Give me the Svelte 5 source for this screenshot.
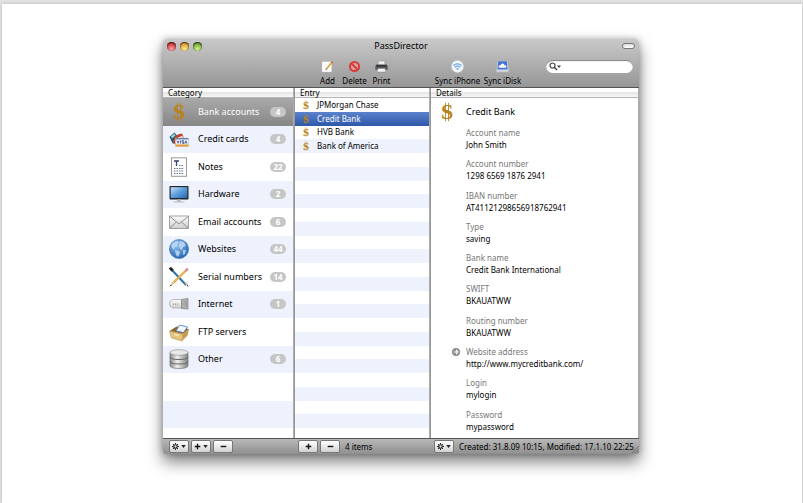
<!--
  PassDirector: three-pane password manager window
  (categories, entries of the category, details of the entry).
-->
<script>
  const categories = [
    { name: 'Bank accounts', icon: 'dollar', count: 4 },
    { name: 'Credit cards', icon: 'cards', count: 4 },
    { name: 'Notes', icon: 'note', count: 22 },
    { name: 'Hardware', icon: 'monitor', count: 2 },
    { name: 'Email accounts', icon: 'mail', count: 6 },
    { name: 'Websites', icon: 'globe', count: 44 },
    { name: 'Serial numbers', icon: 'pencils', count: 14 },
    { name: 'Internet', icon: 'modem', count: 1 },
    { name: 'FTP servers', icon: 'box', count: 0 },
    { name: 'Other', icon: 'disks', count: 6 }
  ];

  const entries = ['JPMorgan Chase', 'Credit Bank', 'HVB Bank', 'Bank of America'];

  const fields = [
    { label: 'Account name', value: 'John Smith' },
    { label: 'Account number', value: '1298 6569 1876 2941' },
    { label: 'IBAN number', value: 'AT41121298656918762941' },
    { label: 'Type', value: 'saving' },
    { label: 'Bank name', value: 'Credit Bank International' },
    { label: 'SWIFT', value: 'BKAUATWW' },
    { label: 'Routing number', value: 'BKAUATWW' },
    { label: 'Website address', value: 'http://www.mycreditbank.com/', link: true },
    { label: 'Login', value: 'mylogin' },
    { label: 'Password', value: 'mypassword' }
  ];

  let category = $state('Bank accounts');
  let entry = $state('Credit Bank');
  let query = $state('');
</script>

{#snippet icon(name)}
  <svg class="icon" viewBox="0 0 20 20" aria-hidden="true">
    {#if name === 'dollar'}
      <path d="M8.500 .8v18.400M11.500 .8v18.400" stroke="#b9821c" stroke-width=".9" />
      <text x="10" y="17" text-anchor="middle" class="coin">S</text>
    {:else if name === 'cards'}
      <path d="M.5 8l5-4.500L10 9l-6 6z" fill="#1d5a6e" />
      <path d="M2 7.500l3.500-3 1 2-3.500 3z" fill="#a9d0cf" />
      <path d="M4 13q1-8 9-8.500l2 5-9 6z" fill="#c3402d" />
      <path d="M6 13q1-5 7.500-6l1 3-7 5z" fill="#f2e7dc" />
      <rect x="6.500" y="9" width="13" height="8.500" fill="#f3f3f3" stroke="#a9a9a9" stroke-width=".4" />
      <path d="M6.500 9h13v1.500h-13z" fill="#6f86b5" />
      <path d="M6.500 15.500h13v2h-13z" fill="#e29a35" />
      <path d="M8 11.700l1 2.600 1-2.600M11.500 11.500v3M15 11.800h-2v1.200h2v1.300h-2M16 14.600l1-2.800 1 2.800" fill="none" stroke="#29498c" stroke-width=".8" />
    {:else if name === 'note'}
      <rect x="2.500" y=".8" width="15" height="18.500" fill="#fdfdfd" stroke="#999" />
      <path d="M5 4h5M7.500 4v5" stroke="#33416e" stroke-width="1.300" />
      <path d="M10 8.500h5M5 11.500h10M5 14h10M5 16.500h10" stroke="#69718f" stroke-width="1" stroke-dasharray="1.500 1" />
    {:else if name === 'monitor'}
      <rect x=".5" y="2" width="19" height="13.500" rx=".8" fill="#22262d" />
      <rect x="1.700" y="3.200" width="16.600" height="10.800" fill="url(#screen)" />
      <path d="M8 15.500h4v2h3.500v1h-11v-1H8z" fill="#b9bcc0" />
    {:else if name === 'mail'}
      <rect x=".6" y="4" width="18.800" height="12.500" fill="url(#silver)" stroke="#8d8d8d" stroke-width=".8" />
      <path d="M1 4.500l9 7.500 9-7.500M1 16l6.500-6M19 16l-6.500-6" fill="none" stroke="#858585" stroke-width=".9" />
    {:else if name === 'globe'}
      <circle cx="10" cy="10" r="9.600" fill="url(#ocean)" stroke="#2e64a8" stroke-width=".5" />
      <path d="M2 6q3-4 7-4l1 2-2 1 1 2-3 1-1 3-2-2zM11 2l4 1 2 4-3 1-1 3-2-1-1-4zM6 11l4 1 1 2-2 4-2-2zM14 11l3 0-1 4-2 1z" fill="#c4def5" opacity=".8" />
    {:else if name === 'pencils'}
      <path d="M2 2l15 16" stroke="#2976a8" stroke-width="2" />
      <path d="M.8 .8l3 3" stroke="#222" stroke-width="2.800" />
      <path d="M15.500 16l1.800-1.600L19.500 19.500z" fill="#e4c49a" />
      <path d="M17.500 3L4 16" stroke="#e39b34" stroke-width="2.200" />
      <path d="M17.500 3L4 16" stroke="#f5cf7d" stroke-width=".8" />
      <path d="M16.500 4l2.400-2.300" stroke="#d8899b" stroke-width="2.400" />
      <path d="M3.300 14.900l1.800 1.800L.8 19.300z" fill="#dcc095" />
      <path d="M.5 19.500l1.500-2 .8.9zM19.700 19.700l-2-1 .9-.9z" fill="#222" />
    {:else if name === 'modem'}
      <path d="M4 5.500h9v8.500H4q-3.500-1-3.500-4.200T4 5.500z" fill="url(#silver)" stroke="#a5a5a5" stroke-width=".7" />
      <path d="M12.500 5.500l6.500-1v10.500l-6.500-.5z" fill="#b5b5b5" stroke="#7d7d7d" stroke-width=".7" />
      <path d="M14 7.500h1.800v2H14zM14 11h1.800v2H14zM17.200 7v6" fill="#eee" stroke="#777" stroke-width=".5" />
      <path d="M4.500 9.500v1.500M6.500 9.500v1.500M8.500 9.500v1.500" stroke="#888" stroke-width=".7" />
    {:else if name === 'box'}
      <path d="M.5 9l7-4.500L20 7l-6 5z" fill="#8b6a2c" />
      <path d="M7 9l3.500-6 8 2-4 5.500z" fill="#f3f7fd" stroke="#4774c5" stroke-width=".8" />
      <path d="M.5 9L14 12l-1 7L2.500 16z" fill="#e2c47c" stroke="#aa8338" stroke-width=".5" />
      <path d="M14 12l6-5-1.500 6.500L13 19z" fill="#c49c4d" />
      <path d="M5.500 11.500l4.500 1v2l-4.500-1z" fill="#f5e2ac" />
    {:else if name === 'disks'}
      <path d="M1 3.500v13q0 3 9 3t9-3v-13z" fill="url(#steel)" stroke="#777" stroke-width=".7" />
      <ellipse cx="10" cy="3.500" rx="9" ry="2.800" fill="#e9e9e9" stroke="#888" stroke-width=".6" />
      <path d="M1 8q0 2.500 9 2.500T19 8M1 12.500Q1 15 10 15t9-2.500" fill="none" stroke="#666" />
    {:else if name === 'add'}
      <path d="M1.500 2.500h15v16h-15z" fill="#fff" stroke="#bbb" stroke-width=".6" />
      <path d="M8.500 13.500L17 3.500" stroke="#e4a23a" stroke-width="2.800" />
      <path d="M16.200 4.500l1.500-1.800" stroke="#bc5b48" stroke-width="2.800" />
      <path d="M7 15.300l.5-2.800 2 1.800z" fill="#444" />
    {:else if name === 'delete'}
      <circle cx="10" cy="10" r="7" fill="#dfa3a0" stroke="#d63a3a" stroke-width="3" />
      <path d="M5 5l10 10" stroke="#d63a3a" stroke-width="3" />
    {:else if name === 'print'}
      <path d="M5 1.500h10V8H5z" fill="#ececec" stroke="#777" stroke-width=".5" />
      <path d="M2 7h16l1.500 3v5H.5v-5z" fill="#55585c" />
      <path d="M2 8h16v2H2z" fill="#2a2c2f" />
      <path d="M4.500 13h11l1 5.500h-13z" fill="#f4f4f4" stroke="#666" stroke-width=".5" />
    {:else if name === 'phone'}
      <circle cx="10" cy="10" r="9.500" fill="#f3f6fa" stroke="#b8bcc2" stroke-width=".7" />
      <path d="M3.500 8.300q6.500-5 13 0M5.700 11q4.300-3.400 8.600 0" fill="none" stroke="#6ea6e4" stroke-width="1.900" />
      <path d="M7.700 13.200q2.300-1.700 4.600 0L10 15.800z" fill="#6ea6e4" />
    {:else if name === 'disk'}
      <path d="M2.500 1h15l2 14v4H.5v-4z" fill="#e6e9ed" stroke="#8d929a" stroke-width=".5" />
      <path d="M3.500 2h13l1.500 12.500H2z" fill="#3f74d2" />
      <path d="M5.500 12q-2-.5-1.500-2.500T7 8q.7-2.800 3.200-2.800T13.200 8q2.800 0 2.800 2T14.500 12z" fill="#fff" />
      <path d="M1.500 17h17" stroke="#8e959f" stroke-width=".8" />
    {/if}
  </svg>
{/snippet}

{#snippet gear()}
  <svg class="gear" viewBox="0 0 10 10" aria-hidden="true">
    <circle cx="5" cy="5" r="2.500" fill="none" stroke="#222" stroke-width="1.700" />
    <path d="M5 0v2M5 8v2M0 5h2M8 5h2M1.500 1.500l1.400 1.400M7.100 7.100l1.400 1.400M8.500 1.500L7.100 2.900M2.900 7.100L1.500 8.500" stroke="#222" stroke-width="1.400" />
  </svg>
{/snippet}

{#snippet sign(plus)}
  <svg class="gear" viewBox="0 0 10 10" aria-hidden="true">
    <path d={plus ? 'M1 5h8M5 1v8' : 'M1 5h8'} stroke="#111" stroke-width="2" />
  </svg>
{/snippet}

{#snippet arrow()}
  <svg class="arrow" viewBox="0 0 6 4" aria-hidden="true"><path d="M0 0h6L3 4z" fill="#222" /></svg>
{/snippet}

<svg class="defs" aria-hidden="true">
  <defs>
    <linearGradient id="screen" x1="0" y1="0" x2="1" y2="1">
      <stop offset="0" stop-color="#c8e2f7" />
      <stop offset=".5" stop-color="#5b9cdb" />
      <stop offset="1" stop-color="#2c66ad" />
    </linearGradient>
    <linearGradient id="silver" x1="0" y1="0" x2="0" y2="1">
      <stop offset="0" stop-color="#fcfcfc" />
      <stop offset="1" stop-color="#cfcfcf" />
    </linearGradient>
    <linearGradient id="steel">
      <stop offset="0" stop-color="#8a8a8a" />
      <stop offset=".4" stop-color="#f0f0f0" />
      <stop offset="1" stop-color="#808080" />
    </linearGradient>
    <radialGradient id="ocean" cx=".4" cy=".3" r=".7">
      <stop offset="0" stop-color="#8fc1ee" />
      <stop offset="1" stop-color="#2b68b5" />
    </radialGradient>
  </defs>
</svg>

<main class="page">
  <section class="window">
    <header class="chrome">
      <div class="titlebar">
        <div class="lights">
          <button class="light red" aria-label="Close"></button>
          <button class="light yellow" aria-label="Minimize"></button>
          <button class="light green" aria-label="Zoom"></button>
        </div>
        <h1>PassDirector</h1>
        <button class="pill" aria-label="Toggle toolbar"></button>
      </div>
      <div class="toolbar">
        <div class="tools">
          <button class="tool">{@render icon('add')}Add</button>
          <button class="tool">{@render icon('delete')}Delete</button>
          <button class="tool">{@render icon('print')}Print</button>
        </div>
        <div class="tools sync">
          <button class="tool">{@render icon('phone')}Sync iPhone</button>
          <button class="tool">{@render icon('disk')}Sync iDisk</button>
        </div>
        <label class="search">
          <svg viewBox="0 0 12 9" aria-hidden="true">
            <circle cx="3.500" cy="3.500" r="2.500" fill="none" stroke="#444" stroke-width="1.200" />
            <path d="M5.300 5.300L8 8" stroke="#444" stroke-width="1.500" />
            <path d="M8 3.500h4L10 6z" fill="#444" />
          </svg>
          <input type="text" aria-label="Search" bind:value={query} />
        </label>
      </div>
    </header>

    <div class="columns">
      <div class="pane">
        <h2>Category</h2>
        <div class="body stripes-lg">
          <ul class="categories">
            {#each categories as item}
              <li>
                <button class="category" class:selected={item.name === category} onclick={() => (category = item.name)}>
                  {@render icon(item.icon)}
                  <span class="name">{item.name}</span>
                  {#if item.count}<span class="badge">{item.count}</span>{/if}
                </button>
              </li>
            {/each}
          </ul>
        </div>
      </div>

      <div class="pane">
        <h2>Entry</h2>
        <div class="body stripes-sm">
          <ul class="entries">
            {#each entries as name}
              <li>
                <button class="entry" class:selected={name === entry} onclick={() => (entry = name)}>
                  {@render icon('dollar')}
                  <span>{name}</span>
                </button>
              </li>
            {/each}
          </ul>
        </div>
      </div>

      <div class="pane">
        <h2>Details</h2>
        <div class="body">
          <div class="heading">
            {@render icon('dollar')}
            <h3>{entry}</h3>
          </div>
          <dl>
            {#each fields as field}
              <div class="field">
                <dt>
                  {#if field.link}
                    <svg class="go" viewBox="0 0 10 10" aria-hidden="true">
                      <circle cx="5" cy="5" r="5" fill="#8c8c8c" />
                      <path d="M2 5h4M5 2.500L7.500 5 5 7.500" fill="none" stroke="#fff" stroke-width="1.400" />
                    </svg>
                  {/if}
                  {field.label}
                </dt>
                <dd>
                  {#if field.link}<a href={field.value}>{field.value}</a>{:else}{field.value}{/if}
                </dd>
              </div>
            {/each}
          </dl>
        </div>
      </div>
    </div>

    <footer class="columns">
      <div class="actions first">
        <button class="action" aria-label="Category actions">{@render gear()}{@render arrow()}</button>
        <button class="action" aria-label="Add category">{@render sign(true)}{@render arrow()}</button>
        <button class="action" aria-label="Remove category">{@render sign(false)}</button>
      </div>
      <div class="actions">
        <button class="action" aria-label="Add entry">{@render sign(true)}</button>
        <button class="action" aria-label="Remove entry">{@render sign(false)}</button>
        <span class="status">4 items</span>
      </div>
      <div class="actions">
        <button class="action" aria-label="Entry actions">{@render gear()}{@render arrow()}</button>
        <span class="status">Created: 31.8.09 10:15, Modified: 17.1.10 22:25</span>
        <svg class="grip" viewBox="0 0 8 8" aria-hidden="true">
          <path d="M0 8l8-8M3 8l5-5M6 8l2-2" stroke="#666" stroke-width=".8" />
        </svg>
      </div>
    </footer>
  </section>
</main>

<style>
  :global(body) {
    margin: 0;
    background: #e2e2e2;
  }

  .defs {
    position: absolute;
    width: 0;
    height: 0;
  }

  .page {
    box-sizing: border-box;
    min-height: calc(100vh - 4px);
    margin: 4px 1px 0 2px;
    padding: 35px 2px 35px 0;
    background: #fff;
    box-shadow: 0 0 3px rgba(0, 0, 0, 0.2);
    font-family: 'Lucida Grande', 'Noto Sans', sans-serif;
    font-size: 8px;
    line-height: 10px;
    color: #000;
  }

  button {
    border: 0;
    padding: 0;
    background: none;
    font: inherit;
    color: inherit;
  }

  h1,
  h2,
  h3,
  ul,
  dl,
  dd {
    margin: 0;
    padding: 0;
    font-weight: 400;
    font-size: inherit;
  }

  ul {
    list-style: none;
  }

  .icon {
    flex: none;
    width: 20px;
    height: 20px;
    overflow: visible;
  }

  .coin {
    font: bold 22px 'Liberation Serif', serif;
    fill: #b9821c;
  }

  .window {
    width: 100%;
    max-width: 476px;
    margin: 0 auto;
    border-radius: 4px 4px 2px 2px;
    box-shadow:
      0 8px 16px rgba(0, 0, 0, 0.5),
      0 0 6px rgba(0, 0, 0, 0.25);
  }

  /* Title bar and toolbar */
  .chrome {
    border-bottom: 1px solid #555;
    border-radius: 4px 4px 0 0;
    background: linear-gradient(#c9c9c9, #969696);
  }

  .titlebar {
    display: grid;
    grid-template-columns: 1fr auto 1fr;
    align-items: center;
    height: 14px;
    padding: 0 4px;
  }

  .titlebar h1 {
    font-size: 9px;
  }

  .lights {
    display: flex;
    gap: 4px;
  }

  .light {
    width: 9px;
    height: 9px;
    border-radius: 50%;
    box-shadow: inset 0 1px 1px rgba(0, 0, 0, 0.6), inset 0 0 1px rgba(0, 0, 0, 0.5);
  }

  .red { background: radial-gradient(circle at 50% 80%, #ffa7a7, #c9303c 70%); }
  .yellow { background: radial-gradient(circle at 50% 80%, #fff08c, #d8912f 70%); }
  .green { background: radial-gradient(circle at 50% 80%, #d5f78e, #6aa035 70%); }

  .pill {
    justify-self: end;
    width: 13px;
    height: 6px;
    border: 1px solid #777;
    border-radius: 3px;
    background: linear-gradient(#ddd, #fff);
  }

  .toolbar {
    display: flex;
    align-items: flex-start;
    height: 27px;
    padding: 7px 6px 0 151px;
  }

  .tools {
    display: flex;
  }

  .sync {
    margin-left: 40px;
  }

  .tool {
    display: flex;
    flex-direction: column;
    align-items: center;
    gap: 3px;
    width: 27px;
    white-space: nowrap;
  }

  .sync .tool {
    width: 45px;
  }

  .tool .icon {
    width: 13px;
    height: 13px;
  }

  .search {
    display: flex;
    align-items: center;
    box-sizing: border-box;
    width: 87px;
    height: 13px;
    margin-left: auto;
    padding: 0 4px 0 3px;
    border-radius: 7px;
    background: #fff;
    box-shadow: inset 0 1px 1px rgba(0, 0, 0, 0.5);
  }

  .search svg {
    flex: none;
    width: 12px;
    height: 9px;
  }

  .search input {
    flex: 1;
    min-width: 0;
    border: 0;
    padding: 0;
    outline: 0;
    background: none;
    font: inherit;
  }

  /* Panes */
  .columns {
    display: grid;
    grid-template-columns: 131px 136px minmax(0, 1fr);
  }

  .pane + .pane {
    border-left: 1px solid #999;
  }

  .pane {
    border-right: 1px solid #aaa;
    background: #fff;
  }

  h2 {
    height: 9px;
    padding: 0 5px;
    border-bottom: 1px solid #b4b4b4;
    background: linear-gradient(#fff 50%, #e6e6e6 50%, #f8f8f8);
    line-height: 9px;
  }

  .body {
    min-height: 340px;
  }

  .stripes-lg,
  .stripes-sm {
    background-image: linear-gradient(#fff 50%, #edf2fd 50%);
    background-size: 100% 55px;
  }

  .stripes-sm {
    background-image: linear-gradient(#fff 25%, #edf2fd 25% 50%, #fff 50% 75%, #edf2fd 75%);
  }

  .categories,
  .entries {
    display: grid;
    grid-auto-rows: 1fr;
    height: 275px;
  }

  .entries {
    height: 55px;
  }

  .category,
  .entry {
    display: flex;
    align-items: center;
    width: 100%;
    height: 100%;
    text-align: left;
  }

  .category {
    padding: 0 7px 0 6px;
    font-size: 9px;
  }

  .category.selected {
    background: linear-gradient(#a9a9a9, #878787);
    color: #fff;
  }

  .name {
    flex: 1;
    padding-left: 9px;
    white-space: nowrap;
  }

  .badge {
    flex: none;
    width: 16px;
    border-radius: 5px;
    background: #c6c6c6;
    color: #fff;
    font-size: 8px;
    font-weight: 700;
    text-align: center;
  }

  .entry {
    gap: 6px;
    padding: 0 6px;
  }

  .entry .icon {
    width: 10px;
    height: 10px;
  }

  .entry.selected {
    background: linear-gradient(#5b83cd, #2d57a8);
    color: #fff;
  }

  /* Details */
  .heading {
    display: flex;
    align-items: center;
    gap: 9px;
    height: 27px;
    padding-left: 6px;
  }

  .heading h3 {
    font-size: 9px;
  }

  dl {
    display: grid;
    grid-auto-rows: 1fr;
    height: 313px;
    padding-left: 35px;
  }

  dt {
    position: relative;
    padding-top: 3px;
    color: #777;
  }

  dd {
    padding-top: 2px;
  }

  dd a {
    color: inherit;
    text-decoration: none;
  }

  .go {
    position: absolute;
    top: 4px;
    left: -14px;
    width: 8px;
    height: 8px;
  }

  /* Bottom bar */
  footer {
    border-top: 1px solid #555;
    border-radius: 0 0 2px 2px;
    background: linear-gradient(#b8b8b8, #8f8f8f);
  }

  .actions {
    position: relative;
    display: flex;
    align-items: center;
    gap: 2px;
    height: 15px;
    padding-left: 4px;
  }

  .first {
    padding-left: 6px;
  }

  .action {
    display: flex;
    flex: none;
    align-items: center;
    justify-content: center;
    gap: 2px;
    box-sizing: border-box;
    width: 20px;
    height: 13px;
    border: 1px solid #777;
    border-radius: 2px;
    background: linear-gradient(#fff, #d2d2d2);
  }

  .gear {
    width: 7px;
    height: 7px;
  }

  .arrow {
    width: 5px;
    height: 3px;
  }

  .status {
    padding-left: 3px;
    white-space: nowrap;
  }

  .grip {
    position: absolute;
    right: 0;
    bottom: 1px;
    width: 7px;
    height: 7px;
  }
</style>
